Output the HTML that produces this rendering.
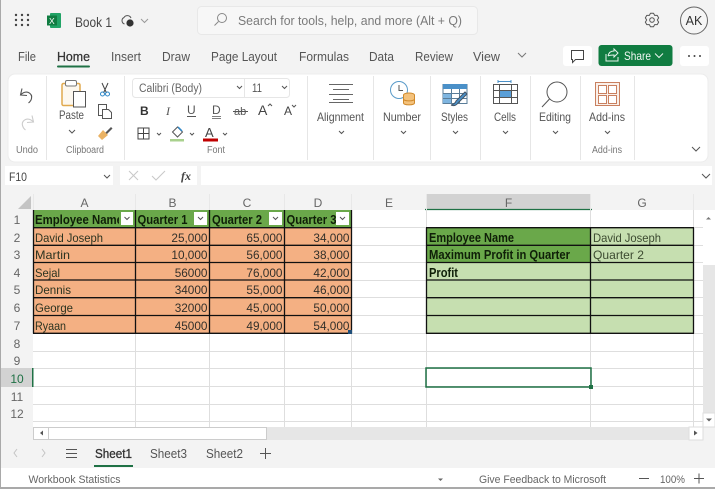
<!DOCTYPE html>
<html><head><meta charset="utf-8"><style>
html,body{margin:0;padding:0;width:715px;height:489px;overflow:hidden;background:#f3f3f3}
svg{display:block;filter:blur(.3px)}
text{font-family:"Liberation Sans",sans-serif;fill:#444}
.g{stroke:#dedede;stroke-width:1;fill:none}
.k{stroke:#111;stroke-width:1.3;fill:none}
.c{fill:#2b3320;font-size:12px}
.b{fill:#0f1f08;font-size:12.5px;font-weight:bold}
.n{font-size:11.8px;text-anchor:end;fill:#33302a}
.i{fill:none;stroke:#555;stroke-width:1}
.h{font-size:12px;fill:#666;text-anchor:middle}
.r{font-size:10px;fill:#777}
.u{font-size:12px;fill:#555}
.t{font-size:13px;fill:#555}
</style></head><body>
<svg width="715" height="489" viewBox="0 0 715 489" xmlns="http://www.w3.org/2000/svg">
<rect width="715" height="489" fill="#f3f3f3"/>
<!-- top bar -->
<g fill="#444"><circle cx="16" cy="15" r="1.2"/><circle cx="22" cy="15" r="1.2"/><circle cx="28" cy="15" r="1.2"/><circle cx="16" cy="20" r="1.2"/><circle cx="22" cy="20" r="1.2"/><circle cx="28" cy="20" r="1.2"/><circle cx="16" cy="25" r="1.2"/><circle cx="22" cy="25" r="1.2"/><circle cx="28" cy="25" r="1.2"/></g>
<rect x="50" y="13" width="11" height="15" rx="1" fill="#21a366"/><rect x="47" y="15.500" width="10" height="10" fill="#107c41"/><text x="49" y="24" style="font-size:8.500px;fill:#fff">X</text>
<text x="75" y="27" textLength="37" lengthAdjust="spacingAndGlyphs" style="font-size:14px;fill:#444">Book 1</text>
<path d="M124.500 24a3.500 3.500 0 0 1-.5-6.500 4 4 0 0 1 7 .5" fill="none" stroke="#555"/><circle cx="130" cy="23" r="3.600" fill="#333"/>
<path d="M141 19l3.500 3.500 3.500-3.500" fill="none" style="stroke:#999"/>
<rect x="197.500" y="6.500" width="280" height="28" rx="4" fill="#f7f7f7" stroke="#e8e8e8"/>
<circle cx="222" cy="18" r="4.500" fill="none" stroke="#888"/><path d="M218.500 21.500l-4 4" fill="none" stroke="#888"/>
<text x="238" y="25" textLength="224" lengthAdjust="spacingAndGlyphs" style="font-size:13px;fill:#7a7a7a">Search for tools, help, and more (Alt + Q)</text>
<g transform="translate(652,20)" fill="none" stroke="#555" stroke-linejoin="round"><circle r="2.300"/><path d="M-1.500-6.800H1.500L2.650-4.600 5.200-4.680 6.660-2.160 5.300 0 6.660 2.160 5.200 4.680 2.650 4.600 1.500 6.800H-1.500L-2.650 4.600-5.200 4.680-6.660 2.160-5.300 0-6.660-2.160-5.200-4.680-2.650-4.600z"/></g>
<circle cx="694" cy="20.500" r="13.500" fill="#f5f5f5" stroke="#666"/><text x="694" y="25" text-anchor="middle" style="font-size:12.500px;fill:#333">AK</text>
<!-- tabs -->
<text class="t" x="18" y="61" textLength="18" lengthAdjust="spacingAndGlyphs">File</text>
<text x="57" y="61" textLength="33" lengthAdjust="spacingAndGlyphs" style="font-size:13px;fill:#333;stroke:#333;stroke-width:.25">Home</text>
<rect x="57" y="65.500" width="33" height="2" rx="1" fill="#1f7145"/>
<text class="t" x="111" y="61" textLength="30" lengthAdjust="spacingAndGlyphs">Insert</text>
<text class="t" x="162" y="61" textLength="28" lengthAdjust="spacingAndGlyphs">Draw</text>
<text class="t" x="211" y="61" textLength="66" lengthAdjust="spacingAndGlyphs">Page Layout</text>
<text class="t" x="299" y="61" textLength="50" lengthAdjust="spacingAndGlyphs">Formulas</text>
<text class="t" x="369" y="61" textLength="25" lengthAdjust="spacingAndGlyphs">Data</text>
<text class="t" x="415" y="61" textLength="38" lengthAdjust="spacingAndGlyphs">Review</text>
<text class="t" x="473" y="61" textLength="27" lengthAdjust="spacingAndGlyphs">View</text>
<path d="M518 53l4 4 4-4" fill="none" stroke="#777"/>
<rect x="563" y="46" width="29" height="20" rx="3" fill="#fff"/><path d="M571.500 50.500h12v9h-8l-3 3v-3h-1z" fill="none" stroke="#444"/>
<rect x="598.500" y="45" width="74" height="21" rx="3" fill="#107c41"/>
<path d="M606 54v7h12v-4M608 56q1-5 6-5v-2l4 4-4 4v-2q-4 0-6 1" fill="none" stroke="#e6f3ec"/>
<text x="624" y="60" textLength="27" lengthAdjust="spacingAndGlyphs" style="font-size:12px;fill:#f2f8f4">Share</text>
<path d="M655 53.500l4 4 4-4" fill="none" stroke="#eaf4ee"/>
<rect x="680" y="46" width="29" height="20" rx="3" fill="#fff"/><g fill="#444"><circle cx="689" cy="56" r="1"/><circle cx="694.500" cy="56" r="1"/><circle cx="700" cy="56" r="1"/></g>
<!-- ribbon -->
<rect x="8" y="74" width="700" height="88" rx="7" fill="#fff" stroke="#ececec"/>
<g stroke="#e6e6e6"><path d="M46.500 76v84M124.500 76v84M307.500 76v84M373.500 76v84M430.500 76v84M480.500 76v84M530.500 76v84M580.500 76v84M634.500 76v84"/></g>
<!-- undo redo -->
<path d="M22 88.500l-1.500 6.500 6.500.5M20.500 95q4-4 8-2.500 4 2 3 6-.5 2.500-3 4.500" fill="none" stroke="#555" stroke-width="1.100"/>
<path d="M32 115.500l1.500 6.500-6.500.5M33.500 122q-4-4-8-2.500-4 2-3 6 .5 2.500 3 4.500" fill="none" stroke="#ccc" stroke-width="1.100"/>
<text class="r" x="16" y="153" textLength="22" lengthAdjust="spacingAndGlyphs">Undo</text>
<!-- paste -->
<rect x="62" y="83.500" width="18" height="22" rx="1.500" fill="#fdf8ef" stroke="#e0a94f" stroke-width="1.500"/>
<rect x="65.500" y="80.500" width="11" height="5.500" rx="1.500" fill="#fff" stroke="#777"/>
<rect x="73.500" y="91.500" width="12" height="15.500" fill="#fff" stroke="#555"/>
<text x="59" y="119" textLength="25" lengthAdjust="spacingAndGlyphs" style="font-size:12px;fill:#555">Paste</text>
<path d="M69 130l3 3 3-3" class="i"/>
<path d="M102 83l4.500 10M108 83l-4.500 10" stroke="#444" fill="none"/><circle cx="102.500" cy="94" r="2" fill="none" stroke="#2e87c8"/><circle cx="107.500" cy="94" r="2" fill="none" stroke="#2e87c8"/>
<rect x="98.500" y="104.500" width="8" height="11" fill="#fff" stroke="#555"/><path d="M102.500 109.500h6l3 3v6h-9z" fill="#fff" stroke="#555"/>
<path d="M104 134l7-7 1.500 1.500-7 7z" fill="#555"/><path d="M98 136l5-6 5 5-6 5z" fill="#eab263"/>
<text class="r" x="66" y="153" textLength="38" lengthAdjust="spacingAndGlyphs">Clipboard</text>
<!-- font -->
<rect x="132.500" y="78.500" width="157" height="19" rx="3" fill="#fff" stroke="#e6e6e6"/><path d="M244.500 79v18" stroke="#e6e6e6"/>
<text x="139" y="92" textLength="63" lengthAdjust="spacingAndGlyphs" style="font-size:11.500px;fill:#666">Calibri (Body)</text>
<path d="M237 86l2.500 2.500 2.500-2.500M282 86l2.500 2.500 2.500-2.500" class="i"/>
<text x="252" y="92" textLength="10" lengthAdjust="spacingAndGlyphs" style="font-size:11.500px;fill:#555">11</text>
<text x="140" y="115" style="font-size:12px;font-weight:bold;fill:#333">B</text>
<text x="166" y="115" style="font-size:12px;font-style:italic;font-family:'Liberation Serif',serif;fill:#555">I</text>
<text x="187" y="114" style="font-size:12px;fill:#555">U</text><path d="M187 116.500h9" stroke="#555"/>
<text x="212" y="114" style="font-size:12px;fill:#555">D</text><path d="M212 116.500h9M212 118.500h9" stroke="#555" stroke-width=".8"/>
<text x="234" y="115" style="font-size:11px;fill:#555">ab</text><path d="M233 111.500h15" stroke="#555"/>
<text x="258" y="115" style="font-size:14px;fill:#444">A</text><path d="M268 106l2 -2 2 2" class="i"/>
<text x="284" y="115" style="font-size:12px;fill:#444">A</text><path d="M292 105l2 2 2-2" class="i"/>
<rect x="138" y="128" width="11" height="11" fill="none" stroke="#444"/><path d="M143.500 128v11M138 133.500h11" stroke="#444"/>
<path d="M157 133l2 2 2-2M190 133l2 2 2-2M223 133l2 2 2-2" class="i"/>
<path d="M172.500 132l5-5 5 5-5 5z" fill="none" stroke="#555"/><path d="M178 127l4 4" stroke="#2e87c8" stroke-width="1.500"/><rect x="170" y="139" width="14" height="2.500" fill="#a9d18e"/>
<text x="205" y="137" style="font-size:13px;fill:#444">A</text><rect x="203" y="138.500" width="15" height="3" fill="#c00000"/>
<text class="r" x="207" y="153" textLength="18" lengthAdjust="spacingAndGlyphs">Font</text>
<!-- alignment -->
<path d="M329 84.500h24M333 89.500h16M329 94.500h24M333 99.500h16M329 102.500h24" stroke="#666"/>
<text class="u" x="317" y="121" textLength="47" lengthAdjust="spacingAndGlyphs">Alignment</text>
<path d="M339 131l2.500 2.500 2.500-2.500M401 131l2.500 2.500 2.500-2.500M453 131l2.500 2.500 2.500-2.500M503 131l2.500 2.500 2.500-2.500M553 131l2.500 2.500 2.500-2.500M605 131l2.500 2.500 2.500-2.500" class="i"/>
<!-- number -->
<circle cx="399" cy="90" r="8.500" fill="#fff" stroke="#5a9bc9"/><path d="M399 85v5.500h4" fill="none" stroke="#555"/>
<ellipse cx="409" cy="95" rx="5.500" ry="2" fill="#f4c27c" stroke="#d08a2c"/><path d="M403.500 95v8c0 2.500 11 2.500 11 0v-8" fill="#f4c27c" stroke="#d08a2c"/><path d="M403.500 99c0 2.500 11 2.500 11 0" fill="none" stroke="#d08a2c"/>
<text class="u" x="383" y="121" textLength="38" lengthAdjust="spacingAndGlyphs">Number</text>
<!-- styles -->
<rect x="443" y="84.500" width="24" height="19" fill="#fff" stroke="#5a7d99"/><rect x="443" y="84" width="24" height="5" fill="#4a90c8"/><rect x="443" y="93" width="9" height="10" fill="#7eb5e0"/><path d="M443 93.500h24M443 98.500h24M451.500 89v14M459.500 89v14" stroke="#5a7d99" fill="none"/>
<path d="M451 105q4-1 5-4l9-9 2 2-9 9q-3 4-7 2" fill="#4a90c8" stroke="#456"/>
<text class="u" x="441" y="121" textLength="27" lengthAdjust="spacingAndGlyphs">Styles</text>
<!-- cells -->
<path d="M498 81.500h13M498 80v3M511 80v3" stroke="#4a90c8" fill="none"/>
<rect x="493.500" y="84.500" width="24" height="19" fill="#fff" stroke="#555"/><rect x="499" y="91" width="13" height="6" fill="#5a9fd8"/><path d="M493.500 90.500h24M493.500 97.500h24M499.500 84v19M511.500 84v19" stroke="#555" fill="none"/>
<text class="u" x="494" y="121" textLength="22" lengthAdjust="spacingAndGlyphs">Cells</text>
<!-- editing -->
<circle cx="557" cy="92" r="10" fill="none" stroke="#555"/><path d="M549.500 99l-7.500 8" stroke="#555" fill="none"/>
<text class="u" x="539" y="121" textLength="32" lengthAdjust="spacingAndGlyphs">Editing</text>
<!-- add-ins -->
<rect x="595.500" y="82.500" width="24" height="23" fill="#faf0ea" stroke="#c9805f"/><rect x="598.500" y="85.500" width="8" height="8" fill="#fff" stroke="#c9805f"/><rect x="608.500" y="85.500" width="8" height="8" fill="#fff" stroke="#c9805f"/><rect x="598.500" y="95.500" width="8" height="8" fill="#fff" stroke="#c9805f"/><rect x="608.500" y="95.500" width="8" height="8" fill="#fff" stroke="#c9805f"/>
<text class="u" x="589" y="121" textLength="36" lengthAdjust="spacingAndGlyphs">Add-ins</text>
<text class="r" x="592" y="153" textLength="30" lengthAdjust="spacingAndGlyphs">Add-ins</text>
<path d="M692 147l4 4 4-4" class="i"/>
<!-- formula bar -->
<rect x="5" y="166" width="108" height="19" fill="#fff"/><rect x="120" y="166" width="77" height="19" fill="#fff"/><rect x="201" y="166" width="511" height="19" fill="#fff"/>
<text x="9" y="181" textLength="18" lengthAdjust="spacingAndGlyphs" style="font-size:11.500px;fill:#444">F10</text>
<path d="M104 175l3 3 3-3M702 174l4 4 4-4" class="i"/>
<path d="M129 171l9 9M138 171l-9 9M152 176l4 4 9-9" fill="none" stroke="#c8c8c8"/>
<text x="181" y="180" style="font-size:12px;font-style:italic;font-weight:bold;font-family:'Liberation Serif',serif;fill:#444">fx</text>
<!-- grid base -->
<rect x="1" y="194" width="702" height="233" fill="#f3f3f3"/>
<rect x="33" y="210" width="670" height="217" fill="#fff"/>
<rect x="426" y="194" width="165" height="16" fill="#d2d2d2"/><path d="M425 209.500h167" stroke="#1f7145" stroke-width="1.300"/>
<rect x="1" y="368" width="32" height="19" fill="#d2d2d2"/>
<path d="M31 196v13H18z" fill="#c4c4c4"/>
<path d="M33.500 194v16M135.500 194v16M209.500 194v16M284.500 194v16M351.500 194v16M426.500 194v16M590.500 194v16M693.500 194v16" stroke="#e8e8e8" fill="none"/>
<g class="g">
<path d="M135.500 210v217M209.500 210v217M284.500 210v217M351.500 210v217M426.500 210v217M590.500 210v217M693.500 210v217"/>
<path d="M33 227.500h670M33 245.500h670M33 262.500h670M33 280.500h670M33 297.500h670M33 315.500h670M33 333.500h670M33 351.500h670M33 368.500h670M33 386.500h670M33 404.500h670M33 421.500h670"/>
</g>
<g>
<text class="h" x="84.500" y="207">A</text><text class="h" x="172.500" y="207">B</text><text class="h" x="247" y="207">C</text><text class="h" x="318" y="207">D</text><text class="h" x="389" y="207">E</text><text class="h" x="508.500" y="207">F</text><text class="h" x="642" y="207">G</text>
<text class="h" x="17" y="224">1</text><text class="h" x="17" y="242">2</text><text class="h" x="17" y="259">3</text><text class="h" x="17" y="277">4</text><text class="h" x="17" y="294">5</text><text class="h" x="17" y="312">6</text><text class="h" x="17" y="330">7</text><text class="h" x="17" y="348">8</text><text class="h" x="17" y="365">9</text>
<text class="h" x="17" y="383" style="fill:#1f7145">10</text><text class="h" x="17" y="401">11</text><text class="h" x="17" y="418">12</text>
</g>
<!-- table 1 -->
<rect x="33" y="210" width="319" height="17.500" fill="#6aa84a"/>
<rect x="33" y="228" width="319" height="105.500" fill="#f4b083"/>
<text class="b" x="35" y="224" textLength="88" lengthAdjust="spacingAndGlyphs">Employee Name</text>
<rect x="119" y="211" width="2" height="16" fill="#6aa84a"/>
<text class="b" x="137.500" y="224" textLength="50" lengthAdjust="spacingAndGlyphs">Quarter 1</text>
<text class="b" x="212" y="224" textLength="50" lengthAdjust="spacingAndGlyphs">Quarter 2</text>
<text class="b" x="286.500" y="224" textLength="50" lengthAdjust="spacingAndGlyphs">Quarter 3</text>
<g class="k">
<path d="M33 227.700h319M33 245.300h319M33 262.500h319M33 280h319M33 297.700h319M33 315.500h319M33 333.300h319"/>
<path d="M33.500 210v123.500M135.500 210v123.500M209.500 210v123.500M284.500 210v123.500M351.500 210v123.500"/>
</g>
<g fill="#fff"><rect x="121" y="212" width="12" height="13"/><rect x="194" y="212" width="13" height="13"/><rect x="269" y="212" width="13" height="13"/><rect x="336" y="212" width="13" height="13"/></g>
<path d="M124.500 217l2.500 2.500 2.500-2.500M198 217l2.500 2.500 2.500-2.500M273 217l2.500 2.500 2.500-2.500M340 217l2.500 2.500 2.500-2.500" fill="none" stroke="#555"/>
<g>
<text class="c" x="35" y="242" textLength="68" lengthAdjust="spacingAndGlyphs">David Joseph</text><text class="c" x="35" y="259" textLength="35" lengthAdjust="spacingAndGlyphs">Martin</text><text class="c" x="35" y="277" textLength="25" lengthAdjust="spacingAndGlyphs">Sejal</text><text class="c" x="35" y="294" textLength="36" lengthAdjust="spacingAndGlyphs">Dennis</text><text class="c" x="35" y="312" textLength="38" lengthAdjust="spacingAndGlyphs">George</text><text class="c" x="35" y="330" textLength="31" lengthAdjust="spacingAndGlyphs">Ryaan</text>
</g>
<g>
<text class="n" x="207.500" y="242">25,000</text><text class="n" x="282.500" y="242">65,000</text><text class="n" x="349.500" y="242">34,000</text>
<text class="n" x="207.500" y="259">10,000</text><text class="n" x="282.500" y="259">56,000</text><text class="n" x="349.500" y="259">38,000</text>
<text class="n" x="207.500" y="277">56000</text><text class="n" x="282.500" y="277">76,000</text><text class="n" x="349.500" y="277">42,000</text>
<text class="n" x="207.500" y="294">34000</text><text class="n" x="282.500" y="294">55,000</text><text class="n" x="349.500" y="294">46,000</text>
<text class="n" x="207.500" y="312">32000</text><text class="n" x="282.500" y="312">45,000</text><text class="n" x="349.500" y="312">50,000</text>
<text class="n" x="207.500" y="330">45000</text><text class="n" x="282.500" y="330">49,000</text><text class="n" x="349.500" y="330">54,000</text>
</g>
<rect x="348" y="330" width="4" height="4" fill="#1f4e79"/>
<!-- table 2 -->
<rect x="426.500" y="228" width="267" height="105.500" fill="#c6dfb0"/>
<rect x="426.500" y="228" width="164" height="35" fill="#6aa84a"/>
<g class="k">
<path d="M426 227.700h268M426 245.300h268M426 262.500h268M426 280h268M426 297.700h268M426 315.500h268M426 333.300h268"/>
<path d="M426.500 228v105.500M590.500 228v105.500M693.500 228v105.500"/>
</g>
<text class="b" x="429" y="242" textLength="85" lengthAdjust="spacingAndGlyphs">Employee Name</text>
<text class="b" x="429" y="259" textLength="141" lengthAdjust="spacingAndGlyphs">Maximum Profit in Quarter</text>
<text class="b" x="429" y="277" textLength="29" lengthAdjust="spacingAndGlyphs">Profit</text>
<text class="c" x="593" y="242" textLength="68" lengthAdjust="spacingAndGlyphs" style="fill:#3c4a30">David Joseph</text>
<text class="c" x="593" y="259" textLength="51" lengthAdjust="spacingAndGlyphs" style="fill:#3c4a30">Quarter 2</text>
<!-- selection -->
<rect x="426" y="368" width="165" height="19" fill="none" stroke="#1f7145" stroke-width="1.500"/>
<rect x="589" y="385" width="4" height="4" fill="#1f7145"/>
<rect x="32" y="368" width="1.500" height="19" fill="#1f7145"/>
<!-- scrollbars -->
<rect x="703" y="210" width="12" height="217" fill="#e6e6e6"/>
<rect x="703" y="210" width="12" height="55" fill="#fff"/>
<path d="M706 219.500l2.500-2.500 2.500 2.500z" fill="#777"/>
<rect x="703" y="413" width="12" height="14" fill="#fff" stroke="#ddd"/><path d="M706 418.500h6l-3 3z" fill="#666"/>
<rect x="33" y="427" width="670" height="13" fill="#e6e6e6"/>
<rect x="33.500" y="427.500" width="233" height="12" fill="#fff" stroke="#ccc"/><path d="M48.500 428v11" stroke="#ccc"/><path d="M43 430.500v5l-3-2.500z" fill="#555"/>
<rect x="689" y="427" width="14" height="13" fill="#fff" stroke="#ddd"/><path d="M694 430.500v5l3.500-2.500z" fill="#555"/>
<!-- sheet tabs -->
<path d="M17 449l-3 4 3 4M42 449l3 4-3 4" fill="none" stroke="#c4c4c4"/>
<path d="M66 449.500h11M66 453.500h11M66 457.500h11" stroke="#555"/>
<text x="95" y="458" textLength="37" lengthAdjust="spacingAndGlyphs" style="font-size:12.500px;fill:#333;stroke:#333;stroke-width:.3">Sheet1</text>
<rect x="94" y="465" width="39" height="2" fill="#1f7145"/>
<text x="150" y="458" textLength="37" lengthAdjust="spacingAndGlyphs" style="font-size:12.500px;fill:#555">Sheet3</text>
<text x="206" y="458" textLength="37" lengthAdjust="spacingAndGlyphs" style="font-size:12.500px;fill:#555">Sheet2</text>
<path d="M260 453.500h11M265.500 448v11" stroke="#555"/>
<!-- status bar -->
<rect x="1" y="468" width="714" height="19" fill="#fff"/>
<rect x="0" y="487" width="715" height="2" fill="#a9a9a9"/>
<rect x="0" y="0" width="1" height="489" fill="#a9a9a9"/>
<text x="28.500" y="483" textLength="92" lengthAdjust="spacingAndGlyphs" style="font-size:11px;fill:#666">Workbook Statistics</text>
<path d="M438 478.500h5l-2.500 2.500z" fill="#666"/>
<text x="479" y="483" textLength="127" lengthAdjust="spacingAndGlyphs" style="font-size:11px;fill:#666">Give Feedback to Microsoft</text>
<path d="M639 478.500h10M694 478.500h10M699 473.500v10" stroke="#555"/>
<text x="660" y="483" textLength="25" lengthAdjust="spacingAndGlyphs" style="font-size:11px;fill:#666">100%</text>
</svg>
</body></html>
